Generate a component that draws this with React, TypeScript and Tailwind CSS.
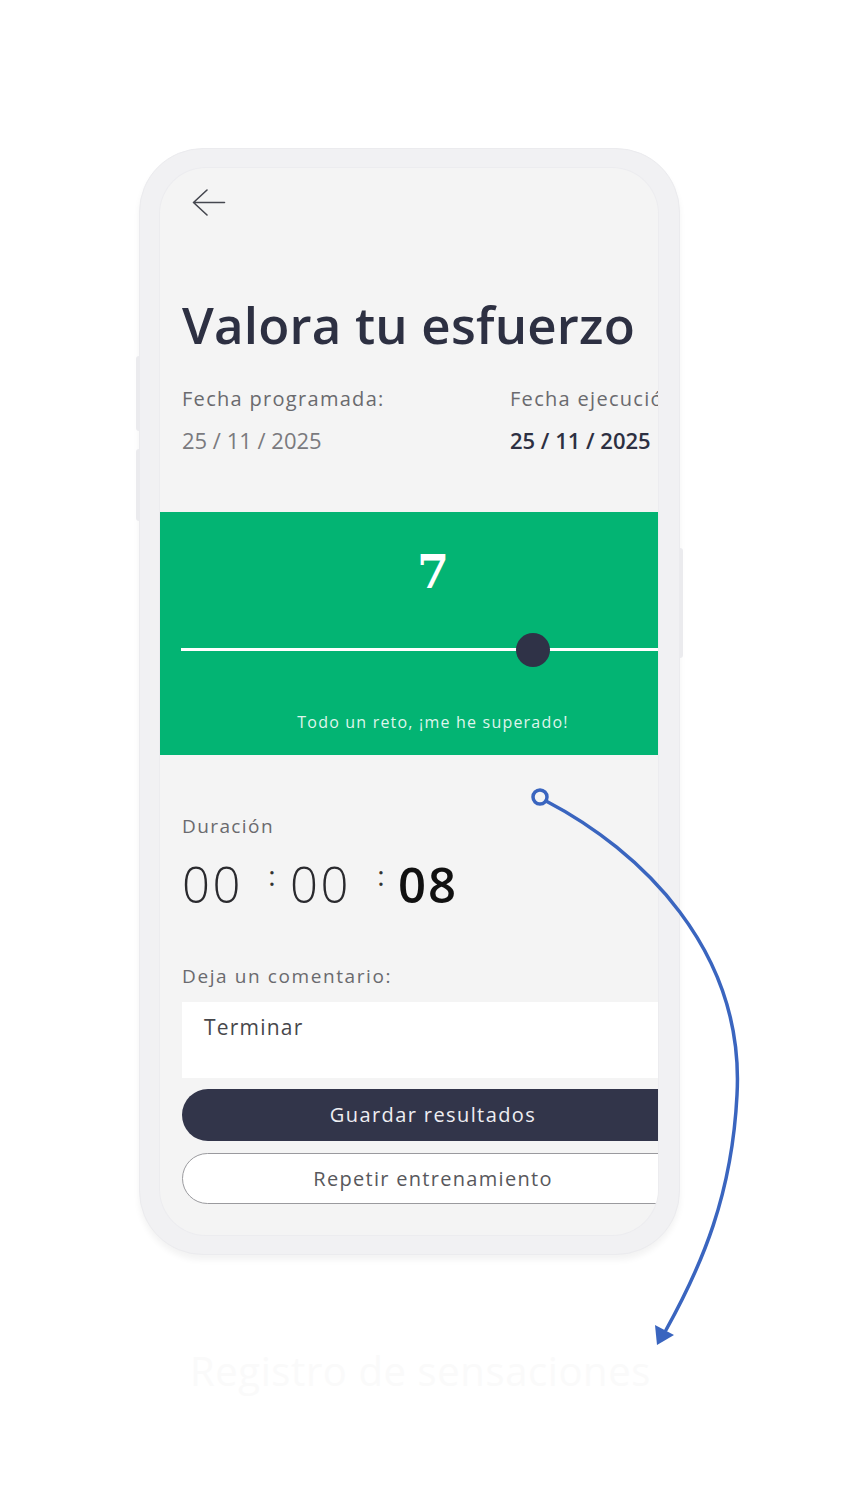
const SliderRow = ({ value }: { value: number }) => {
    // thumb position in px from the left of the track
    const left = 335 + (value - 7) * 48;
    return (
        <div className="relative ml-[21px] h-[34px]">
            <div className="absolute left-0 right-0 top-[15px] h-[3px] bg-white" />
            <div className="absolute top-0 h-[34px] w-[34px] rounded-full bg-[#2f3247]" style={{ left }} />
        </div>
    );
};

const Colon = () => (
    <span className="flex w-[6px] justify-center mt-[1px] text-[28px] leading-[28px] text-[#333]">:</span>
);

const App = () => {
    return (
        <div className="relative w-[844px] min-h-[1500px] bg-white" style={{ fontFamily: '"Open Sans", sans-serif' }}>
            <div className="pt-[148px] pl-[139px]">
                {/* Phone */}
                <div className="relative w-[541px] h-[1107px] rounded-[64px] bg-[#f1f1f3] border border-[#ebebee] pt-[19px] pb-[19px] pl-[20px] pr-[21px] shadow-[0_5px_6px_rgba(0,0,0,0.05)]">
                    <div className="absolute -left-[4px] top-[207px] h-[75px] w-[3px] rounded-l bg-[#ebebee]" />
                    <div className="absolute -left-[4px] top-[300px] h-[72px] w-[3px] rounded-l bg-[#ebebee]" />
                    <div className="absolute -right-[4px] top-[399px] h-[110px] w-[3px] rounded-r bg-[#ebebee]" />

                    <div className="h-full w-full rounded-[46px] bg-[#f4f4f4] overflow-hidden ring-1 ring-[#ececef]">
                        <div className="w-[546px]">
                            {/* header */}
                            <div className="pt-[21px] pl-[32px] h-[48px]">
                                <svg width="34" height="28" viewBox="0 0 34 28" fill="none">
                                    <path d="M1.5 13.5 H32.5 M15 1 L1.5 13.5 L15 26" stroke="#45474f" strokeWidth="1.6" strokeLinecap="round" strokeLinejoin="round" />
                                </svg>
                            </div>

                            <div className="px-[22px]">
                                <h1 className="mt-[78px] text-[51px] leading-[60px] font-semibold tracking-[0.2px] text-[#2d3042]">
                                    Valora tu esfuerzo
                                </h1>

                                <div className="mt-[32px] grid grid-cols-[328px_1fr] text-[20px] leading-[25px] text-[#6a6a6e] tracking-[1.3px]">
                                    <span>Fecha programada:</span>
                                    <span className="whitespace-nowrap">Fecha ejecución:</span>
                                </div>
                                <div className="mt-[15px] grid grid-cols-[328px_1fr] text-[22px] leading-[28px]">
                                    <span className="text-[#7a7a7e]">25 / 11 / 2025</span>
                                    <span className="font-semibold text-[#2d3042]">25 / 11 / 2025</span>
                                </div>
                            </div>

                            {/* effort panel */}
                            <div className="mt-[58px] h-[243px] bg-[#03b473] pt-[36px]">
                                <div className="text-center text-[46px] leading-[48px] font-bold text-white" style={{ fontFamily: '"DejaVu Serif", serif' }}>
                                    7
                                </div>
                                <div className="mt-[37px]">
                                    <SliderRow value={7} />
                                </div>
                                <p className="mt-[45px] text-center text-[16px] leading-[20px] tracking-[1.2px] text-[#dff5ec]">
                                    Todo un reto, ¡me he superado!
                                </p>
                            </div>

                            <div className="px-[22px]">
                                <p className="mt-[59px] text-[19px] leading-[24px] tracking-[1.4px] text-[#6a6a6e]">Duración</p>
                                <div className="mt-[22px] flex items-start h-[49px] text-[49px] leading-[49px]">
                                    <span className="w-[62px] font-light text-[#2a2a2e] tracking-[2.5px]">00</span>
                                    <span className="ml-[25px]"><Colon /></span>
                                    <span className="ml-[15px] w-[62px] font-light text-[#2a2a2e] tracking-[2.5px]">00</span>
                                    <span className="ml-[26px]"><Colon /></span>
                                    <span className="ml-[14px] w-[62px] font-semibold text-[#111] tracking-[2px]">08</span>
                                </div>

                                <p className="mt-[55px] text-[19px] leading-[24px] tracking-[1.6px] text-[#6a6a6e]">Deja un comentario:</p>
                                <div className="mt-[14px] h-[76px] bg-white pl-[22px] pt-[12px] text-[21px] leading-[26px] tracking-[1.2px] text-[#47474b]">
                                    Terminar
                                </div>

                                <button className="mt-[11px] flex h-[52px] w-full items-center justify-center rounded-full bg-[#32354a] text-[20px] tracking-[1.4px] text-[#eeeef2]">
                                    Guardar resultados
                                </button>
                                <button className="mt-[12px] flex h-[51px] w-full items-center justify-center rounded-full border border-[#9a9a9e] bg-white text-[20px] tracking-[1.3px] text-[#58585c]">
                                    Repetir entrenamiento
                                </button>
                            </div>
                        </div>
                    </div>
                </div>
            </div>

            <p className="mt-[92px] pl-[190px] text-[40px] leading-[48px] font-medium tracking-[0.6px] text-[#fafafa]">Registro de sensaciones</p>

            {/* annotation arrow */}
            <svg className="pointer-events-none absolute left-0 top-0" width="844" height="1500" viewBox="0 0 844 1500" fill="none">
                <circle cx="540" cy="797" r="7" stroke="#3a65bf" strokeWidth="3.5" />
                <path d="M546 801 C 640 850, 745 950, 737 1095 C 732 1195, 702 1265, 666 1330" stroke="#3a65bf" strokeWidth="3.5" strokeLinecap="round" />
                <polygon points="657,1345 655,1325 674,1335" fill="#3a65bf" />
            </svg>
        </div>
    );
};

export default App;
